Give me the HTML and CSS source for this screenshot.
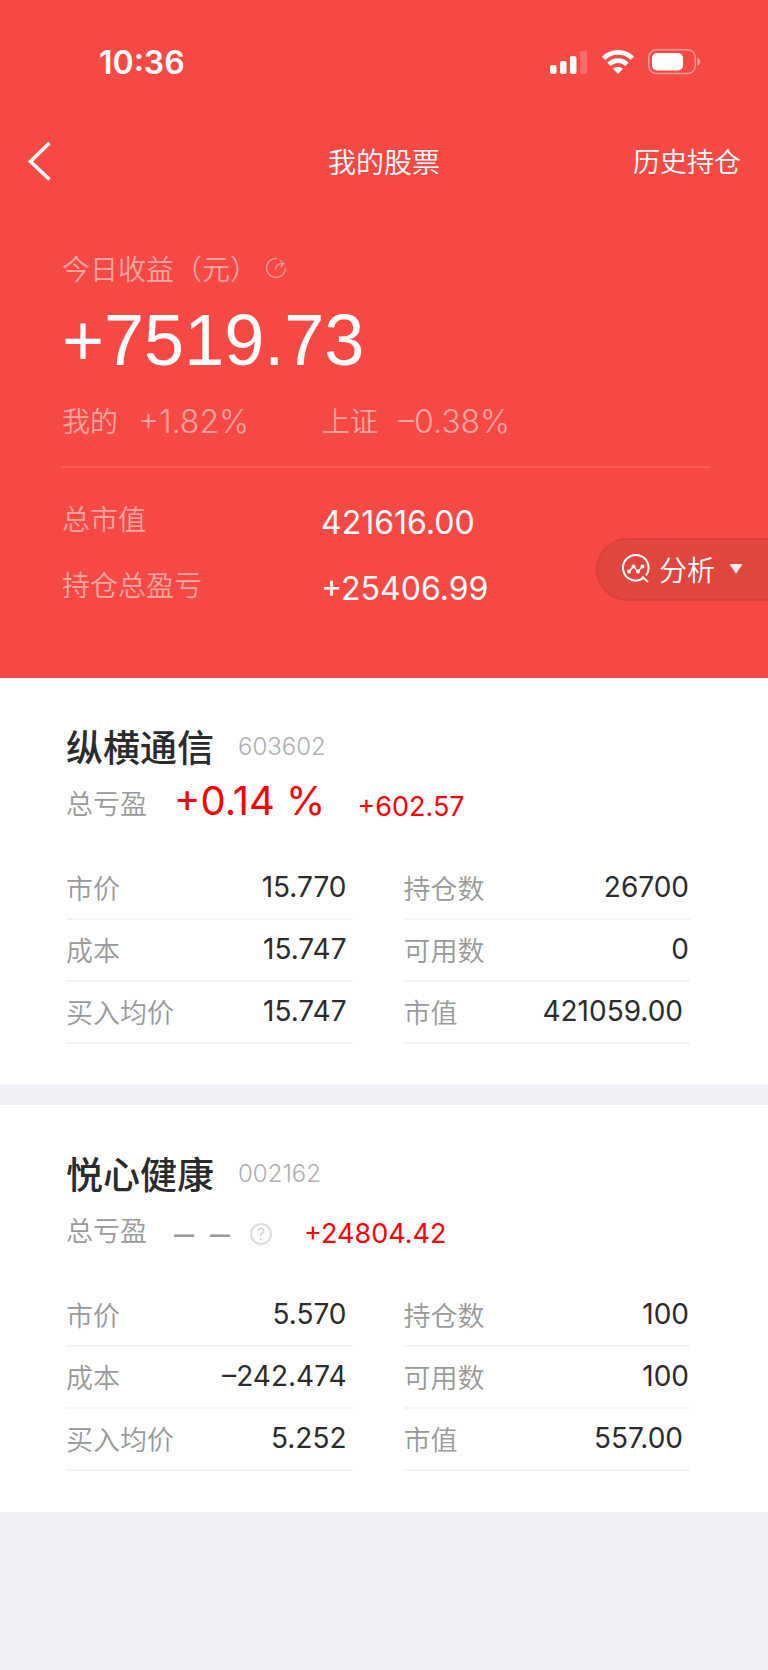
FILE: index.html
```html
<!DOCTYPE html>
<html lang="zh-CN">
<head>
<meta charset="utf-8">
<meta name="viewport" content="width=device-width, initial-scale=1">
<title>我的股票</title>
<link rel="stylesheet" href="styles.css">
</head>
<body>
<header class="hero">
  <div class="status">
    <span class="clock">10:36</span>
    <div class="status-icons">
      <svg width="38" height="24" viewBox="0 0 38 24" fill="#fff" aria-hidden="true">
        <rect x="0" y="15" width="6.500" height="9" rx="2"/>
        <rect x="10" y="11" width="6.500" height="13" rx="2"/>
        <rect x="20" y="6" width="6.500" height="18" rx="2"/>
        <rect x="30" y="1" width="7" height="23" rx="2" opacity=".2"/>
      </svg>
      <svg width="34" height="24" viewBox="0 0 34 24" aria-hidden="true">
        <g fill="none" stroke="#fff" stroke-width="4.800">
          <path d="M2.500 8.400A20.500 20.500 0 0 1 31.500 8.400"/>
          <path d="M8 14.400A12.800 12.800 0 0 1 26 14.400"/>
        </g>
        <path d="M17 24l-5-5.200a7.200 7.200 0 0 1 10 0z" fill="#fff"/>
      </svg>
      <svg width="53" height="26" viewBox="0 0 53 26" aria-hidden="true">
        <rect x=".8" y=".8" width="46.400" height="23.800" rx="7.500" fill="none" stroke="#fff" stroke-width="1.500" opacity=".45"/>
        <rect x="4" y="4" width="31" height="17.500" rx="5" fill="#fff"/>
        <path d="M49.500 8.800c2 .8 2.500 2.400 2.500 4s-.5 3.200-2.500 4z" fill="#fff" opacity=".5"/>
      </svg>
    </div>
  </div>
  <nav class="nav">
    <button class="back" type="button" aria-label="返回">
      <svg width="24" height="40" viewBox="0 0 24 40" fill="none" stroke="#fff" stroke-width="3.600" aria-hidden="true"><path d="M22.500 2L3.500 20.500 22.500 38.500"/></svg>
    </button>
    <h1 class="title">我的股票</h1>
    <a class="history" href="#">历史持仓</a>
  </nav>
  <section class="summary">
    <div class="today-label">
      <span>今日收益（元）</span>
      <svg width="22" height="22" viewBox="0 0 22 22" fill="none" stroke="#fff" stroke-width="1.400" opacity=".42" aria-hidden="true">
        <path d="M12 1.500a9.500 9.500 0 1 0 8.500 9.500"/>
        <path d="M10.500 13c0-4 2-6.500 7.500-6.500M15 3.500l4 3-3.500 3.500"/>
      </svg>
    </div>
    <div class="today-value">+7519.73</div>
    <div class="rates">
      <div class="rate"><span>我的</span><span class="rate-value">+1.82%</span></div>
      <div class="rate"><span>上证</span><span class="rate-value">–0.38%</span></div>
    </div>
    <dl class="totals">
      <dt>总市值</dt><dd>421616.00</dd>
      <dt>持仓总盈亏</dt><dd>+25406.99</dd>
    </dl>
  </section>
  <button class="analyse" type="button">
    <svg width="30" height="30" viewBox="0 0 30 30" fill="none" stroke="#fff" stroke-width="2" aria-hidden="true">
      <path d="M22.500 24A12.800 12.800 0 1 1 25 21.500M21 22.500l6 5.500"/>
      <path d="M8 17.500l4.500-5 4.500 5 4.500-5" stroke-width="1.500"/>
      <g fill="#fff" stroke="none"><circle cx="8" cy="17.500" r="2"/><circle cx="12.500" cy="12.500" r="2"/><circle cx="17" cy="17.500" r="2"/><circle cx="21.500" cy="12.500" r="2"/></g>
    </svg>
    <span>分析</span>
    <svg class="caret" width="14" height="10" viewBox="0 0 14 10" fill="#fff" aria-hidden="true"><path d="M.5 0h13L7 10z"/></svg>
  </button>
</header>
<main class="holdings">
  <article class="card">
    <div class="card-head"><h2 class="name">纵横通信</h2><span class="code">603602</span></div>
    <div class="profit">
      <span class="profit-label">总亏盈</span>
      <span class="percent">+0.14 %</span>
      <span class="amount">+602.57</span>
    </div>
    <div class="details">
      <dl class="col">
        <div class="row"><dt>市价</dt><dd>15.770</dd></div>
        <div class="row"><dt>成本</dt><dd>15.747</dd></div>
        <div class="row"><dt>买入均价</dt><dd>15.747</dd></div>
      </dl>
      <dl class="col col-right">
        <div class="row"><dt>持仓数</dt><dd>26700</dd></div>
        <div class="row"><dt>可用数</dt><dd>0</dd></div>
        <div class="row worth"><dt>市值</dt><dd>421059.00</dd></div>
      </dl>
    </div>
  </article>
  <article class="card">
    <div class="card-head"><h2 class="name">悦心健康</h2><span class="code">002162</span></div>
    <div class="profit">
      <span class="profit-label">总亏盈</span>
      <span class="none"><span>–</span><span>–</span></span>
      <button class="help" type="button" aria-label="说明">?</button>
      <span class="amount">+24804.42</span>
    </div>
    <div class="details">
      <dl class="col">
        <div class="row"><dt>市价</dt><dd>5.570</dd></div>
        <div class="row"><dt>成本</dt><dd>–242.474</dd></div>
        <div class="row"><dt>买入均价</dt><dd>5.252</dd></div>
      </dl>
      <dl class="col col-right">
        <div class="row"><dt>持仓数</dt><dd>100</dd></div>
        <div class="row"><dt>可用数</dt><dd>100</dd></div>
        <div class="row worth"><dt>市值</dt><dd>557.00</dd></div>
      </dl>
    </div>
  </article>
</main>
</body>
</html>
```
FILE: styles.css
```css
* { box-sizing: border-box; margin: 0; padding: 0; }
body {
  background: #efeef4;
  color: #2b2b2b;
  font-family: Inter, "Noto Sans CJK SC", sans-serif;
  font-size: 28px;
  font-weight: 350;
}
button { border: 0; background: none; font: inherit; color: inherit; cursor: pointer; }
svg { display: block; flex: none; }

.hero { position: relative; background: #f64944; color: #fff; padding-bottom: 60px; }
.status { display: flex; justify-content: space-between; align-items: center; height: 124px; padding: 0 67px 0 99px; }
.clock { font-size: 32px; font-weight: 600; }
.status-icons { display: flex; align-items: center; gap: 13px; }

.nav { display: grid; grid-template-columns: 1fr auto 1fr; align-items: center; height: 73px; padding: 0 27px; }
.back { justify-self: start; }
.title { font-size: 28px; font-weight: 350; }
.history { justify-self: end; color: inherit; font-size: 27px; text-decoration: none; }

.summary { padding: 51px 58px 0 62px; }
.today-label { display: flex; align-items: center; gap: 7px; height: 40px; color: #ffa6a3; }
.today-value { font-family: "Liberation Sans", sans-serif; font-size: 72px; font-weight: 400; line-height: 104px; }
.rates { display: flex; height: 76px; padding-top: 10px; border-bottom: 2px solid #f95f5b; line-height: 40px; color: #ffa6a3; }
.rate { display: flex; align-items: center; gap: 20px; width: 260px; height: 40px; }
.rate-value { font-size: 32px; font-weight: 350; }
.totals { display: grid; grid-template-columns: 259px 1fr; grid-auto-rows: 66px; padding-top: 18px; }
.totals dt { color: #ffa6a3; line-height: 68px; }
.totals dd { font-size: 32px; font-weight: 400; line-height: 74px; }

.analyse {
  position: absolute; right: 0; bottom: 77px;
  display: flex; align-items: center; gap: 8px;
  height: 63px; padding: 0 25px 2px 23px;
  border: 2px solid #da3f3c; border-right: 0; border-radius: 32px 0 0 32px;
  background: #df463e;
}
.caret { margin-left: 6px; opacity: .9; }

.holdings { display: grid; gap: 20px; }
.card { background: #fff; padding: 43px 78px 41px 66px; }
.card-head { display: flex; align-items: center; gap: 24px; height: 50px; }
.name { font-size: 37px; font-weight: 500; }
.code { font-size: 24px; font-weight: 300; color: #b0b0b0; }
.profit { display: flex; align-items: center; height: 62px; }
.profit-label { margin-right: 27px; font-size: 27px; color: #999; }
.percent { margin-right: 32px; padding-bottom: 3px; font-size: 40px; font-weight: 400; color: #fb0006; }
.amount { padding-top: 8px; font-size: 27px; font-weight: 400; color: #fb0006; }
.none { display: flex; gap: 16px; margin-right: 20px; padding-top: 8px; font-size: 40px; font-weight: 350; color: #999; }
.help {
  width: 22px; height: 22px; margin: 10px 32px 0 0;
  border: 2px solid #ddd; border-radius: 50%;
  font-size: 16px; line-height: 18px; color: #c8c8c8;
}
.details { display: grid; grid-template-columns: 1fr 1fr; gap: 51px; padding-top: 25px; }
.row { display: flex; justify-content: space-between; align-items: center; height: 62px; padding: 0 6px 2px 0; border-bottom: 2px solid #f4f4f4; }
.row dt { font-size: 27px; color: #999; }
.row dd { font-weight: 400; }
.col-right .row { padding-right: 1px; }
.col-right .worth { padding-right: 7px; }
```
